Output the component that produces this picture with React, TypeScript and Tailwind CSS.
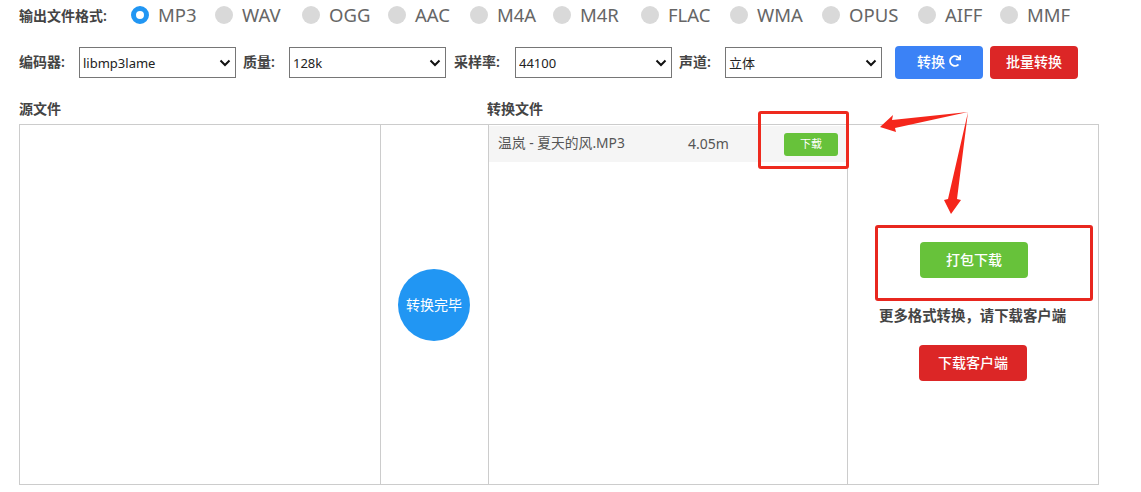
import { FaRedo } from "react-icons/fa";

const formats = [
  { name: "MP3", width: "w-[84px]" },
  { name: "WAV", width: "w-[87px]" },
  { name: "OGG", width: "w-[86px]" },
  { name: "AAC", width: "w-[82px]" },
  { name: "M4A", width: "w-[83px]" },
  { name: "M4R", width: "w-[88px]" },
  { name: "FLAC", width: "w-[89px]" },
  { name: "WMA", width: "w-[92px]" },
  { name: "OPUS", width: "w-[96px]" },
  { name: "AIFF", width: "w-[82px]" },
  { name: "MMF", width: "w-[75px]" },
];

const Field = ({ label, value, labelClass, options }: { label: string; value: string; labelClass: string; options: string[] }) => (
  <>
    <span className={`shrink-0 pb-[3px] text-[14px] font-semibold text-[#444] ${labelClass}`}>{label}</span>
    <div className="relative h-[31px] w-[157px] shrink-0">
      <select
        defaultValue={value}
        className="h-full w-full appearance-none border border-[#767676] bg-white pl-[3px] pt-[2px] text-[13px] text-[#222]"
      >
        {options.map((o) => (
          <option key={o}>{o}</option>
        ))}
      </select>
      <svg className="pointer-events-none absolute right-[5px] top-[12px]" width="12" height="8" viewBox="0 0 12 8">
        <path d="M1.5 1.5 6 6l4.5-4.5" fill="none" stroke="#111" strokeWidth="2" />
      </svg>
    </div>
  </>
);

export default function App() {
  return (
    <div className="relative h-[492px] w-[1141px] overflow-hidden bg-white font-['Noto_Sans','Noto_Sans_CJK_SC',sans-serif]">
      <div className="flex h-[30px] items-center pl-[19px]">
        <span className="w-[112px] shrink-0 text-[14px] font-semibold text-[#444]">输出文件格式:</span>
        {formats.map((f, i) => (
          <label key={f.name} className={`flex shrink-0 items-center gap-[9px] text-[18.5px] text-[#666] ${f.width}`}>
            {i === 0 ? (
              <span className="h-[18px] w-[18px] rounded-full border-[5px] border-[#2196f3] bg-white" />
            ) : (
              <span className="h-[18px] w-[18px] rounded-full bg-[#d9d9d9]" />
            )}
            {f.name}
          </label>
        ))}
      </div>

      <div className="mt-[16px] flex h-[33px] items-center pl-[19px]">
        <Field label="编码器:" value="libmp3lame" labelClass="w-[60px]" options={["libmp3lame"]} />
        <Field label="质量:" value="128k" labelClass="ml-[7px] w-[46px]" options={["128k"]} />
        <Field label="采样率:" value="44100" labelClass="ml-[8px] w-[61px]" options={["44100"]} />
        <Field label="声道:" value="立体" labelClass="ml-[7px] w-[46px]" options={["立体"]} />
        <button className="ml-[13px] flex h-[33px] w-[88px] items-center justify-center gap-1 rounded bg-[#3b82f6] pb-[3px] text-[14px] font-medium text-white">
          转换
          <FaRedo size={12} />
        </button>
        <button className="ml-[7px] h-[33px] w-[88px] rounded bg-[#dc2626] pb-[3px] text-[14px] font-medium text-white">
          批量转换
        </button>
      </div>

      <div className="mt-[20px] flex h-[20px] items-center pb-[2px] pl-[19px] text-[14px] font-semibold text-[#444]">
        <span className="w-[468px]">源文件</span>
        <span>转换文件</span>
      </div>

      <div className="ml-[19px] mt-[5px] flex h-[361px] w-[1080px] border border-[#ccc]">
        <div className="w-[361px] border-r border-[#ccc]" />
        <div className="flex w-[107px] items-center justify-center">
          <div className="mr-[1px] flex h-[72px] w-[72px] items-center justify-center rounded-full bg-[#2196f3] text-[14px] text-white">
            转换完毕
          </div>
        </div>
        <div className="w-[360px] border-x border-[#ccc] pt-[1px]">
          <div className="flex h-[36px] items-center bg-[#f5f5f5] pl-[9px] text-[13.8px] text-[#555]">
            <span className="w-[190px] pb-[2px]">温岚 - 夏天的风.MP3</span>
            <span className="w-[96px] pb-[2px] text-[14px]">4.05m</span>
            <button className="h-[23px] w-[54px] rounded-[3px] bg-[#67c23a] text-[11px] text-white">下载</button>
          </div>
        </div>
        <div className="flex flex-1 flex-col">
          <button className="ml-[72px] mt-[117px] h-[36px] w-[108px] rounded bg-[#67c23a] pb-[1px] text-[14px] font-medium text-white">
            打包下载
          </button>
          <p className="ml-[31px] mt-[28px] text-[14.4px] font-semibold leading-[20px] text-[#444]">更多格式转换，请下载客户端</p>
          <button className="ml-[71px] mt-[19px] h-[36px] w-[108px] rounded bg-[#dc2626] pb-[1px] text-[14px] font-medium text-white">
            下载客户端
          </button>
        </div>
      </div>

      {/* annotations drawn over the screenshot */}
      <div className="absolute left-[758px] top-[111px] h-[58px] w-[91px] rounded-[3px] border-[3px] border-[#ee2a1e]" />
      <div className="absolute left-[875px] top-[225px] h-[76px] w-[218px] rounded-[3px] border-[3px] border-[#e8271f]" />
      <svg className="pointer-events-none absolute left-0 top-0" width="1141" height="492">
        <polygon points="880,127 893,115 892,120 968,112 895,128 896,132" fill="#f5261b" />
        <polygon points="968,112 957,199 961,200 951,214 944,200 948,199" fill="#f5261b" />
      </svg>
    </div>
  );
}
